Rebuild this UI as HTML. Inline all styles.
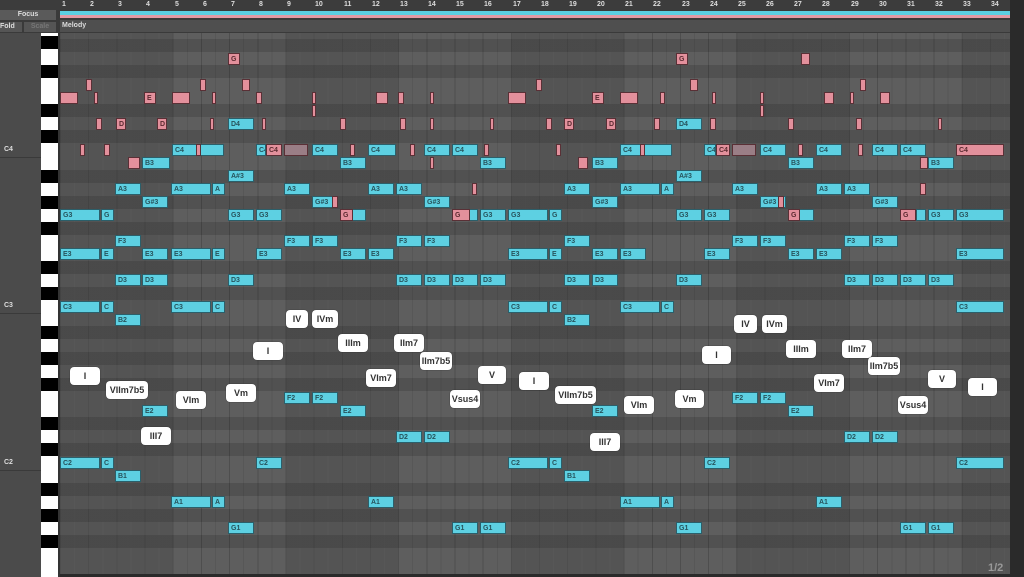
<!DOCTYPE html><html><head><meta charset="utf-8"><style>
*{margin:0;padding:0;box-sizing:border-box}
body{width:1024px;height:577px;overflow:hidden;background:#3a3a3a;font-family:"Liberation Sans",sans-serif;position:relative}
.a{position:absolute}
#grid{position:absolute;left:60px;top:33px;width:950px;height:541px;background-color:#5e5e5e;
background-image:repeating-linear-gradient(90deg,#4e4e4e 0,#4e4e4e 1px,transparent 1px,transparent 28.18px),repeating-linear-gradient(90deg,#575757 0,#575757 1px,transparent 1px,transparent 14.09px),repeating-linear-gradient(90deg,rgba(0,0,0,0.1) 0,rgba(0,0,0,0.1) 112.7px,transparent 112.7px,transparent 225.4px)}
.bk{position:absolute;left:60px;width:950px;height:13px;background:rgba(0,0,0,0.13)}
.pk{position:absolute;left:41px;width:17px;height:13px;background:#000}
i{position:absolute;font-style:normal;height:12px;font-size:7px;font-weight:bold;line-height:11px;padding-left:2px;overflow:hidden;white-space:nowrap}
.c{background:#5dd0e2;border:1px solid #2b5f6a;color:#27535c}
.p{background:#e3909c;border:1px solid #5a3036;color:#5a2a30}
b{position:absolute;background:#fff;border-radius:4px;font-size:9px;color:#333;text-align:center;height:18px;line-height:18px;font-weight:bold;box-shadow:0 0 1px #222}
.n{position:absolute;top:1px;font-size:7px;color:#ddd;font-weight:bold}
</style></head><body>
<div class="a" style="left:0;top:0;width:1024px;height:10px;background:#3c3c3c"></div>
<div class="a" style="left:60px;top:11px;width:950px;height:4px;background:#5ccfe3"></div>
<div class="a" style="left:60px;top:15px;width:950px;height:3px;background:#e39aa5"></div>
<div class="a" style="left:0;top:10px;width:56px;height:10px;background:#5a5a5a;color:#ddd;font-size:7px;font-weight:bold;text-align:center;line-height:10px">Focus</div>
<div class="a" style="left:0;top:22px;width:22px;height:10px;background:#555;color:#ddd;font-size:7px;font-weight:bold;line-height:10px">Fold</div>
<div class="a" style="left:24px;top:22px;width:32px;height:10px;background:#555;color:#777;font-size:7px;font-weight:bold;text-align:center;line-height:10px">Scale</div>
<div class="a" style="left:60px;top:20px;width:950px;height:12px;background:#4f4f4f;color:#ddd;font-size:7px;font-weight:bold;line-height:12px;padding-left:2px">Melody</div>
<div class="a" style="left:0;top:33px;width:41px;height:544px;background:#4b4b4b"></div>
<div class="a" style="left:0;top:157px;width:41px;height:1px;background:#3a3a3a"></div>
<div class="a" style="left:0;top:313px;width:41px;height:1px;background:#3a3a3a"></div>
<div class="a" style="left:0;top:470px;width:41px;height:1px;background:#3a3a3a"></div>
<div class="a" style="left:4px;top:146px;font-size:7px;color:#ddd;font-weight:bold">C4</div>
<div class="a" style="left:4px;top:302px;font-size:7px;color:#ddd;font-weight:bold">C3</div>
<div class="a" style="left:4px;top:459px;font-size:7px;color:#ddd;font-weight:bold">C2</div>
<div class="a" style="left:41px;top:33px;width:17px;height:544px;background:#fff"></div>
<div class="a" style="left:58px;top:33px;width:2px;height:544px;background:#333"></div>
<div id="grid"></div>
<div class="a" style="left:1010px;top:0;width:14px;height:577px;background:#2a2a2a"></div>
<div class="a" style="left:988px;top:562px;font-size:11px;color:#999;font-weight:bold">1/2</div>
<div style="position:absolute;left:0;top:0">
<span class="n" style="left:62px">1</span><span class="n" style="left:90px">2</span><span class="n" style="left:118px">3</span><span class="n" style="left:146px">4</span><span class="n" style="left:175px">5</span><span class="n" style="left:203px">6</span><span class="n" style="left:231px">7</span><span class="n" style="left:259px">8</span><span class="n" style="left:287px">9</span><span class="n" style="left:315px">10</span><span class="n" style="left:344px">11</span><span class="n" style="left:372px">12</span><span class="n" style="left:400px">13</span><span class="n" style="left:428px">14</span><span class="n" style="left:456px">15</span><span class="n" style="left:484px">16</span><span class="n" style="left:513px">17</span><span class="n" style="left:541px">18</span><span class="n" style="left:569px">19</span><span class="n" style="left:597px">20</span><span class="n" style="left:625px">21</span><span class="n" style="left:653px">22</span><span class="n" style="left:682px">23</span><span class="n" style="left:710px">24</span><span class="n" style="left:738px">25</span><span class="n" style="left:766px">26</span><span class="n" style="left:794px">27</span><span class="n" style="left:822px">28</span><span class="n" style="left:851px">29</span><span class="n" style="left:879px">30</span><span class="n" style="left:907px">31</span><span class="n" style="left:935px">32</span><span class="n" style="left:963px">33</span><span class="n" style="left:991px">34</span>
</div>
<div class="bk" style="top:535px"></div><div class="bk" style="top:509px"></div><div class="bk" style="top:483px"></div><div class="bk" style="top:443px"></div><div class="bk" style="top:417px"></div><div class="bk" style="top:378px"></div><div class="bk" style="top:352px"></div><div class="bk" style="top:326px"></div><div class="bk" style="top:287px"></div><div class="bk" style="top:261px"></div><div class="bk" style="top:222px"></div><div class="bk" style="top:196px"></div><div class="bk" style="top:170px"></div><div class="bk" style="top:130px"></div><div class="bk" style="top:104px"></div><div class="bk" style="top:65px"></div><div class="bk" style="top:39px"></div>
<div class="pk" style="top:535px"></div><div class="pk" style="top:509px"></div><div class="pk" style="top:483px"></div><div class="pk" style="top:443px"></div><div class="pk" style="top:417px"></div><div class="pk" style="top:378px"></div><div class="pk" style="top:352px"></div><div class="pk" style="top:326px"></div><div class="pk" style="top:287px"></div><div class="pk" style="top:261px"></div><div class="pk" style="top:222px"></div><div class="pk" style="top:196px"></div><div class="pk" style="top:170px"></div><div class="pk" style="top:130px"></div><div class="pk" style="top:104px"></div><div class="pk" style="top:65px"></div><div class="pk" style="top:36px"></div>
<div class="a" style="left:60px;top:574px;width:950px;height:3px;background:#2a2a2a"></div>

<!-- pink notes -->
<i class="p" style="left:228px;width:12px;top:53px">G</i><i class="p" style="left:676px;width:12px;top:53px">G</i><i class="p" style="left:801px;width:9px;top:53px"></i>
<i class="p" style="left:86px;width:6px;top:79px"></i><i class="p" style="left:200px;width:6px;top:79px"></i><i class="p" style="left:242px;width:8px;top:79px"></i><i class="p" style="left:536px;width:6px;top:79px"></i><i class="p" style="left:690px;width:8px;top:79px"></i><i class="p" style="left:860px;width:6px;top:79px"></i>
<i class="p" style="left:60px;width:18px;top:92px"></i><i class="p" style="left:94px;width:4px;top:92px"></i><i class="p" style="left:144px;width:12px;top:92px">E</i><i class="p" style="left:172px;width:18px;top:92px"></i><i class="p" style="left:212px;width:4px;top:92px"></i><i class="p" style="left:256px;width:6px;top:92px"></i><i class="p" style="left:312px;width:4px;top:92px"></i><i class="p" style="left:376px;width:12px;top:92px"></i><i class="p" style="left:398px;width:6px;top:92px"></i><i class="p" style="left:430px;width:4px;top:92px"></i><i class="p" style="left:508px;width:18px;top:92px"></i><i class="p" style="left:592px;width:12px;top:92px">E</i><i class="p" style="left:620px;width:18px;top:92px"></i><i class="p" style="left:660px;width:5px;top:92px"></i><i class="p" style="left:712px;width:4px;top:92px"></i><i class="p" style="left:760px;width:4px;top:92px"></i><i class="p" style="left:824px;width:10px;top:92px"></i><i class="p" style="left:850px;width:4px;top:92px"></i><i class="p" style="left:880px;width:10px;top:92px"></i>
<i class="p" style="left:312px;width:4px;top:105px"></i><i class="p" style="left:760px;width:4px;top:105px"></i>
<i class="p" style="left:96px;width:6px;top:118px"></i><i class="p" style="left:116px;width:10px;top:118px">D</i><i class="p" style="left:157px;width:10px;top:118px">D</i><i class="p" style="left:210px;width:4px;top:118px"></i><i class="c" style="left:228px;width:26px;top:118px">D4</i><i class="p" style="left:262px;width:4px;top:118px"></i><i class="p" style="left:340px;width:6px;top:118px"></i><i class="p" style="left:400px;width:6px;top:118px"></i><i class="p" style="left:430px;width:4px;top:118px"></i><i class="p" style="left:490px;width:4px;top:118px"></i><i class="p" style="left:546px;width:6px;top:118px"></i><i class="p" style="left:564px;width:10px;top:118px">D</i><i class="p" style="left:606px;width:10px;top:118px">D</i><i class="p" style="left:654px;width:6px;top:118px"></i><i class="c" style="left:676px;width:26px;top:118px">D4</i><i class="p" style="left:710px;width:6px;top:118px"></i><i class="p" style="left:788px;width:6px;top:118px"></i><i class="p" style="left:856px;width:6px;top:118px"></i><i class="p" style="left:938px;width:4px;top:118px"></i>
<i class="p" style="left:80px;width:5px;top:144px"></i><i class="p" style="left:104px;width:6px;top:144px"></i><i class="c" style="left:172px;width:52px;top:144px">C4</i><i class="p" style="left:196px;width:5px;top:144px"></i><i class="c" style="left:256px;width:10px;top:144px">C4</i><i class="p" style="left:266px;width:16px;top:144px">C4</i><i class="p" style="left:284px;width:24px;top:144px;background:#9a7e86"></i><i class="c" style="left:312px;width:26px;top:144px">C4</i><i class="p" style="left:350px;width:5px;top:144px"></i><i class="c" style="left:368px;width:28px;top:144px">C4</i><i class="p" style="left:410px;width:5px;top:144px"></i><i class="c" style="left:424px;width:26px;top:144px">C4</i><i class="c" style="left:452px;width:26px;top:144px">C4</i><i class="p" style="left:484px;width:5px;top:144px"></i><i class="p" style="left:556px;width:5px;top:144px"></i><i class="c" style="left:620px;width:52px;top:144px">C4</i><i class="p" style="left:640px;width:5px;top:144px"></i><i class="c" style="left:704px;width:12px;top:144px">C4</i><i class="p" style="left:716px;width:14px;top:144px">C4</i><i class="p" style="left:732px;width:24px;top:144px;background:#9a7e86"></i><i class="c" style="left:760px;width:26px;top:144px">C4</i><i class="p" style="left:798px;width:5px;top:144px"></i><i class="c" style="left:816px;width:26px;top:144px">C4</i><i class="p" style="left:858px;width:5px;top:144px"></i><i class="c" style="left:872px;width:26px;top:144px">C4</i><i class="c" style="left:900px;width:26px;top:144px">C4</i><i class="p" style="left:956px;width:48px;top:144px">C4</i>
<i class="p" style="left:128px;width:12px;top:157px"></i><i class="c" style="left:142px;width:28px;top:157px">B3</i><i class="c" style="left:340px;width:26px;top:157px">B3</i><i class="p" style="left:430px;width:4px;top:157px"></i><i class="c" style="left:480px;width:26px;top:157px">B3</i><i class="p" style="left:578px;width:10px;top:157px"></i><i class="c" style="left:592px;width:26px;top:157px">B3</i><i class="c" style="left:788px;width:26px;top:157px">B3</i><i class="p" style="left:920px;width:8px;top:157px"></i><i class="c" style="left:928px;width:26px;top:157px">B3</i>
<i class="c" style="left:228px;width:26px;top:170px">A#3</i><i class="c" style="left:676px;width:26px;top:170px">A#3</i>
<i class="c" style="left:115px;width:26px;top:183px">A3</i><i class="c" style="left:171px;width:40px;top:183px">A3</i><i class="c" style="left:212px;width:13px;top:183px">A</i><i class="c" style="left:284px;width:26px;top:183px">A3</i><i class="c" style="left:368px;width:26px;top:183px">A3</i><i class="c" style="left:396px;width:26px;top:183px">A3</i><i class="p" style="left:472px;width:5px;top:183px"></i><i class="c" style="left:564px;width:26px;top:183px">A3</i><i class="c" style="left:620px;width:40px;top:183px">A3</i><i class="c" style="left:661px;width:13px;top:183px">A</i><i class="c" style="left:732px;width:26px;top:183px">A3</i><i class="c" style="left:816px;width:26px;top:183px">A3</i><i class="c" style="left:844px;width:26px;top:183px">A3</i><i class="p" style="left:920px;width:6px;top:183px"></i>
<i class="c" style="left:142px;width:26px;top:196px">G#3</i><i class="c" style="left:312px;width:26px;top:196px">G#3</i><i class="p" style="left:332px;width:6px;top:196px"></i><i class="c" style="left:424px;width:26px;top:196px">G#3</i><i class="c" style="left:592px;width:26px;top:196px">G#3</i><i class="c" style="left:760px;width:26px;top:196px">G#3</i><i class="p" style="left:778px;width:6px;top:196px"></i><i class="c" style="left:872px;width:26px;top:196px">G#3</i>
<i class="c" style="left:60px;width:40px;top:209px">G3</i><i class="c" style="left:101px;width:13px;top:209px">G</i><i class="c" style="left:228px;width:26px;top:209px">G3</i><i class="c" style="left:256px;width:26px;top:209px">G3</i><i class="c" style="left:340px;width:26px;top:209px"></i><i class="p" style="left:340px;width:13px;top:209px">G</i><i class="c" style="left:452px;width:26px;top:209px"></i><i class="p" style="left:452px;width:18px;top:209px">G</i><i class="c" style="left:480px;width:26px;top:209px">G3</i><i class="c" style="left:508px;width:40px;top:209px">G3</i><i class="c" style="left:549px;width:13px;top:209px">G</i><i class="c" style="left:676px;width:26px;top:209px">G3</i><i class="c" style="left:704px;width:26px;top:209px">G3</i><i class="c" style="left:788px;width:26px;top:209px"></i><i class="p" style="left:788px;width:12px;top:209px">G</i><i class="p" style="left:900px;width:16px;top:209px">G</i><i class="c" style="left:916px;width:10px;top:209px"></i><i class="c" style="left:928px;width:26px;top:209px">G3</i><i class="c" style="left:956px;width:48px;top:209px">G3</i>
<i class="c" style="left:115px;width:26px;top:235px">F3</i><i class="c" style="left:284px;width:26px;top:235px">F3</i><i class="c" style="left:312px;width:26px;top:235px">F3</i><i class="c" style="left:396px;width:26px;top:235px">F3</i><i class="c" style="left:424px;width:26px;top:235px">F3</i><i class="c" style="left:564px;width:26px;top:235px">F3</i><i class="c" style="left:732px;width:26px;top:235px">F3</i><i class="c" style="left:760px;width:26px;top:235px">F3</i><i class="c" style="left:844px;width:26px;top:235px">F3</i><i class="c" style="left:872px;width:26px;top:235px">F3</i>
<i class="c" style="left:60px;width:40px;top:248px">E3</i><i class="c" style="left:101px;width:13px;top:248px">E</i><i class="c" style="left:142px;width:26px;top:248px">E3</i><i class="c" style="left:171px;width:40px;top:248px">E3</i><i class="c" style="left:212px;width:13px;top:248px">E</i><i class="c" style="left:256px;width:26px;top:248px">E3</i><i class="c" style="left:340px;width:26px;top:248px">E3</i><i class="c" style="left:368px;width:26px;top:248px">E3</i><i class="c" style="left:508px;width:40px;top:248px">E3</i><i class="c" style="left:549px;width:13px;top:248px">E</i><i class="c" style="left:592px;width:26px;top:248px">E3</i><i class="c" style="left:620px;width:26px;top:248px">E3</i><i class="c" style="left:704px;width:26px;top:248px">E3</i><i class="c" style="left:788px;width:26px;top:248px">E3</i><i class="c" style="left:816px;width:26px;top:248px">E3</i><i class="c" style="left:956px;width:48px;top:248px">E3</i>
<i class="c" style="left:115px;width:26px;top:274px">D3</i><i class="c" style="left:142px;width:26px;top:274px">D3</i><i class="c" style="left:228px;width:26px;top:274px">D3</i><i class="c" style="left:396px;width:26px;top:274px">D3</i><i class="c" style="left:424px;width:26px;top:274px">D3</i><i class="c" style="left:452px;width:26px;top:274px">D3</i><i class="c" style="left:480px;width:26px;top:274px">D3</i><i class="c" style="left:564px;width:26px;top:274px">D3</i><i class="c" style="left:592px;width:26px;top:274px">D3</i><i class="c" style="left:676px;width:26px;top:274px">D3</i><i class="c" style="left:844px;width:26px;top:274px">D3</i><i class="c" style="left:872px;width:26px;top:274px">D3</i><i class="c" style="left:900px;width:26px;top:274px">D3</i><i class="c" style="left:928px;width:26px;top:274px">D3</i>
<i class="c" style="left:60px;width:40px;top:301px">C3</i><i class="c" style="left:101px;width:13px;top:301px">C</i><i class="c" style="left:171px;width:40px;top:301px">C3</i><i class="c" style="left:212px;width:13px;top:301px">C</i><i class="c" style="left:508px;width:40px;top:301px">C3</i><i class="c" style="left:549px;width:13px;top:301px">C</i><i class="c" style="left:620px;width:40px;top:301px">C3</i><i class="c" style="left:661px;width:13px;top:301px">C</i><i class="c" style="left:956px;width:48px;top:301px">C3</i>
<i class="c" style="left:115px;width:26px;top:314px">B2</i><i class="c" style="left:564px;width:26px;top:314px">B2</i>
<i class="c" style="left:284px;width:26px;top:392px">F2</i><i class="c" style="left:312px;width:26px;top:392px">F2</i><i class="c" style="left:732px;width:26px;top:392px">F2</i><i class="c" style="left:760px;width:26px;top:392px">F2</i>
<i class="c" style="left:142px;width:26px;top:405px">E2</i><i class="c" style="left:340px;width:26px;top:405px">E2</i><i class="c" style="left:592px;width:26px;top:405px">E2</i><i class="c" style="left:788px;width:26px;top:405px">E2</i>
<i class="c" style="left:396px;width:26px;top:431px">D2</i><i class="c" style="left:424px;width:26px;top:431px">D2</i><i class="c" style="left:844px;width:26px;top:431px">D2</i><i class="c" style="left:872px;width:26px;top:431px">D2</i>
<i class="c" style="left:60px;width:40px;top:457px">C2</i><i class="c" style="left:101px;width:13px;top:457px">C</i><i class="c" style="left:256px;width:26px;top:457px">C2</i><i class="c" style="left:508px;width:40px;top:457px">C2</i><i class="c" style="left:549px;width:13px;top:457px">C</i><i class="c" style="left:704px;width:26px;top:457px">C2</i><i class="c" style="left:956px;width:48px;top:457px">C2</i>
<i class="c" style="left:115px;width:26px;top:470px">B1</i><i class="c" style="left:564px;width:26px;top:470px">B1</i>
<i class="c" style="left:171px;width:40px;top:496px">A1</i><i class="c" style="left:212px;width:13px;top:496px">A</i><i class="c" style="left:368px;width:26px;top:496px">A1</i><i class="c" style="left:620px;width:40px;top:496px">A1</i><i class="c" style="left:661px;width:13px;top:496px">A</i><i class="c" style="left:816px;width:26px;top:496px">A1</i>
<i class="c" style="left:228px;width:26px;top:522px">G1</i><i class="c" style="left:452px;width:26px;top:522px">G1</i><i class="c" style="left:480px;width:26px;top:522px">G1</i><i class="c" style="left:676px;width:26px;top:522px">G1</i><i class="c" style="left:900px;width:26px;top:522px">G1</i><i class="c" style="left:928px;width:26px;top:522px">G1</i>

<!-- chord labels -->
<b style="left:70px;top:367px;width:30px">I</b>
<b style="left:106px;top:381px;width:42px">VIIm7b5</b>
<b style="left:141px;top:427px;width:30px">III7</b>
<b style="left:176px;top:391px;width:30px">VIm</b>
<b style="left:226px;top:384px;width:30px">Vm</b>
<b style="left:253px;top:342px;width:30px">I</b>
<b style="left:286px;top:310px;width:22px">IV</b>
<b style="left:312px;top:310px;width:26px">IVm</b>
<b style="left:338px;top:334px;width:30px">IIIm</b>
<b style="left:366px;top:369px;width:30px">VIm7</b>
<b style="left:394px;top:334px;width:30px">IIm7</b>
<b style="left:420px;top:352px;width:32px">IIm7b5</b>
<b style="left:450px;top:390px;width:30px">Vsus4</b>
<b style="left:478px;top:366px;width:28px">V</b>
<b style="left:519px;top:372px;width:30px">I</b>
<b style="left:555px;top:386px;width:41px">VIIm7b5</b>
<b style="left:590px;top:433px;width:30px">III7</b>
<b style="left:624px;top:396px;width:30px">VIm</b>
<b style="left:675px;top:390px;width:29px">Vm</b>
<b style="left:702px;top:346px;width:29px">I</b>
<b style="left:734px;top:315px;width:23px">IV</b>
<b style="left:762px;top:315px;width:25px">IVm</b>
<b style="left:786px;top:340px;width:30px">IIIm</b>
<b style="left:814px;top:374px;width:30px">VIm7</b>
<b style="left:842px;top:340px;width:30px">IIm7</b>
<b style="left:868px;top:357px;width:32px">IIm7b5</b>
<b style="left:898px;top:396px;width:30px">Vsus4</b>
<b style="left:928px;top:370px;width:28px">V</b>
<b style="left:968px;top:378px;width:29px">I</b>
</body></html>
